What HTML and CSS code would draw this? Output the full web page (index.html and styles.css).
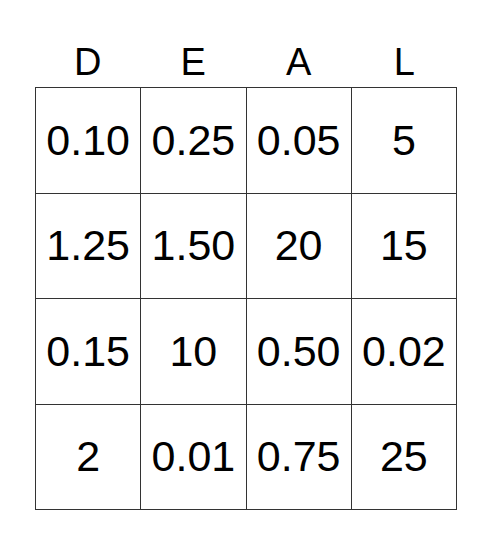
FILE: index.html
```html
<!DOCTYPE html>
<html>
<head>
<meta charset="utf-8">
<link rel="stylesheet" href="styles.css">
</head>
<body>
<div class="card">
  <div class="head">
    <div class="h">D</div><div class="h">E</div><div class="h">A</div><div class="h">L</div>
  </div>
  <table class="board">
    <tr><td>0.10</td><td>0.25</td><td>0.05</td><td>5</td></tr>
    <tr><td>1.25</td><td>1.50</td><td>20</td><td>15</td></tr>
    <tr><td>0.15</td><td>10</td><td>0.50</td><td>0.02</td></tr>
    <tr><td>2</td><td>0.01</td><td>0.75</td><td>25</td></tr>
  </table>
</div>
</body>
</html>
```
FILE: styles.css
```css
html, body { margin: 0; padding: 0; background: #fff; }
body { font-family: "Liberation Sans", Arial, sans-serif; color: #000; }
.card { padding: 0 0 0 35px; width: 422px; }
.head { display: grid; grid-template-columns: repeat(4, 1fr); height: 87px; align-items: end; }
.h { text-align: center; font-size: 38px; line-height: 42px; padding-bottom: 4px; }
.board { border-collapse: collapse; width: 422px; table-layout: fixed; }
.board td { border: 1px solid #333; height: 104.5px; padding: 0; text-align: center; vertical-align: middle; font-size: 43px; }
```
